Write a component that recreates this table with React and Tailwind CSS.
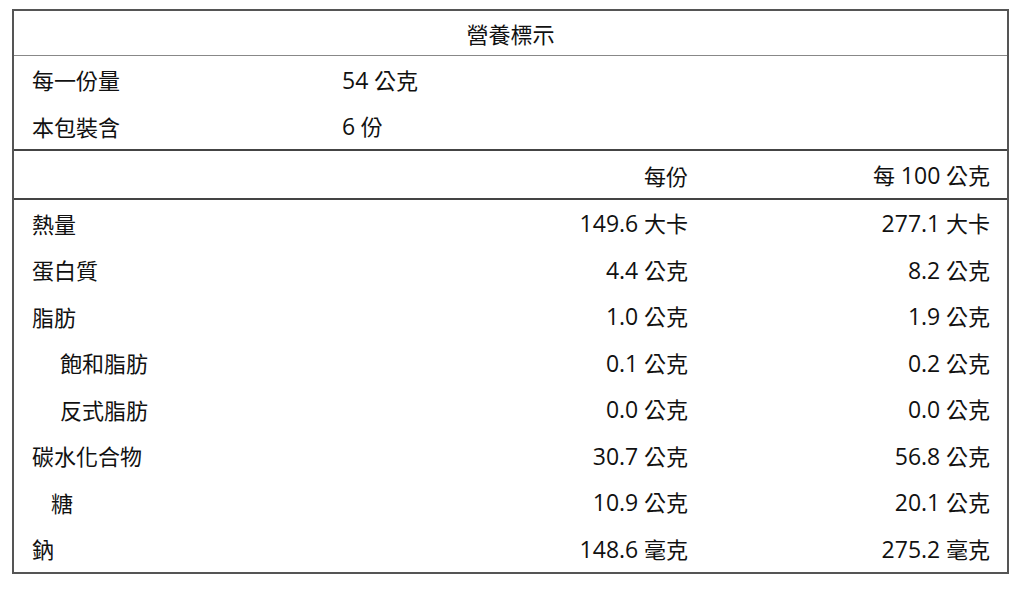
import React from "react";

const rows = [
  { label: "熱量", indent: 0, per: ["149.6", "大卡"], per100: ["277.1", "大卡"] },
  { label: "蛋白質", indent: 0, per: ["4.4", "公克"], per100: ["8.2", "公克"] },
  { label: "脂肪", indent: 0, per: ["1.0", "公克"], per100: ["1.9", "公克"] },
  { label: "飽和脂肪", indent: 2, per: ["0.1", "公克"], per100: ["0.2", "公克"] },
  { label: "反式脂肪", indent: 2, per: ["0.0", "公克"], per100: ["0.0", "公克"] },
  { label: "碳水化合物", indent: 0, per: ["30.7", "公克"], per100: ["56.8", "公克"] },
  { label: "糖", indent: 1, per: ["10.9", "公克"], per100: ["20.1", "公克"] },
  { label: "鈉", indent: 0, per: ["148.6", "毫克"], per100: ["275.2", "毫克"] },
];

function Num({ n }) {
  return <span className="text-[23px]">{n}</span>;
}

export default function App() {
  return (
    <div className="w-[1035px] h-[600px] bg-white pt-[9px] pl-[12px] text-[#111] font-['Open_Sans','Noto_Sans_CJK_TC',sans-serif] text-[22px] leading-none">
      <div className="w-[997px] border-2 border-[#555]">
        {/* title */}
        <div className="h-[45px] pt-[2px] flex items-center justify-center border-b border-[#888]">
          營養標示
        </div>

        {/* serving info */}
        <div className="border-b-2 border-[#444]">
          <div className="h-[47px] pt-[1px] flex items-center pl-[18px]">
            <span className="w-[310px]">每一份量</span>
            <span><Num n="54" /> 公克</span>
          </div>
          <div className="h-[46px] pt-[1px] flex items-center pl-[18px]">
            <span className="w-[310px]">本包裝含</span>
            <span><Num n="6" /> 份</span>
          </div>
        </div>

        {/* column header */}
        <div className="h-[49px] pt-[2px] flex items-center pr-[17px] border-b-2 border-[#444]">
          <span className="flex-1 text-right">每份</span>
          <span className="w-[302px] text-right">每 <Num n="100" /> 公克</span>
        </div>

        {/* nutrients */}
        {rows.map((r) => (
          <div key={r.label} className="h-[46.5px] pt-[1px] flex items-center pr-[17px]">
            <span
              className={
                r.indent === 2
                  ? "flex-1 pl-[46px]"
                  : r.indent === 1
                  ? "flex-1 pl-[37px]"
                  : "flex-1 pl-[18px]"
              }
            >
              {r.label}
            </span>
            <span className="text-right"><Num n={r.per[0]} /> {r.per[1]}</span>
            <span className="w-[302px] text-right"><Num n={r.per100[0]} /> {r.per100[1]}</span>
          </div>
        ))}
      </div>
    </div>
  );
}
